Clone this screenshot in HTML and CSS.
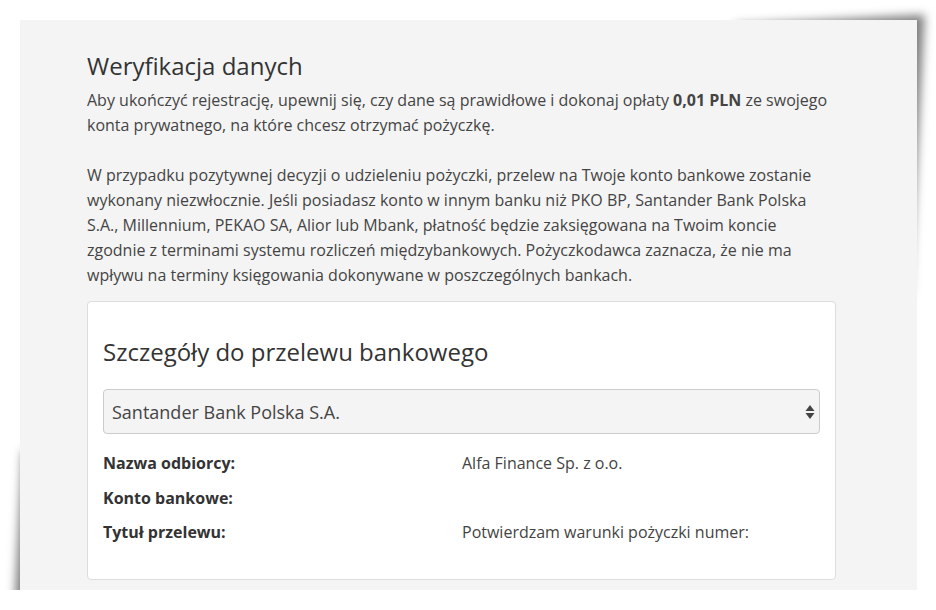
FILE: index.html
```html
<!DOCTYPE html>
<html lang="pl">
<head>
  <meta charset="UTF-8">
  <title>Weryfikacja danych</title>
  <meta name="viewport" content="width=device-width, initial-scale=1.0">
  <link rel="stylesheet" href="styles.css">
</head>
<body>

  <div class="sheet">
    <h2>Weryfikacja danych</h2>
    <p>Aby ukończyć rejestrację, upewnij się, czy dane są prawidłowe i dokonaj opłaty <b>0,01 PLN</b> ze swojego konta prywatnego, na które chcesz otrzymać pożyczkę.</p>
    <p class="last">W przypadku pozytywnej decyzji o udzieleniu pożyczki, przelew na Twoje konto bankowe zostanie wykonany niezwłocznie. Jeśli posiadasz konto w innym banku niż PKO BP, Santander Bank Polska S.A., Millennium, PEKAO SA, Alior lub Mbank, płatność będzie zaksięgowana na Twoim koncie zgodnie z terminami systemu rozliczeń międzybankowych. Pożyczkodawca zaznacza, że nie ma wpływu na terminy księgowania dokonywane w poszczególnych bankach.</p>

    <div class="card">
      <h3>Szczegóły do przelewu bankowego</h3>
      <div class="select">
        <span>Santander Bank Polska S.A.</span>
        <svg width="10" height="16" viewBox="0 0 10 16">
          <path d="M5 1 L9.5 7 L0.5 7 Z" fill="#444"/>
          <path d="M5 15 L9.5 9 L0.5 9 Z" fill="#444"/>
        </svg>
      </div>
      <div class="details">
        <div class="row"><b>Nazwa odbiorcy:</b><span>Alfa Finance Sp. z o.o.</span></div>
        <div class="row"><b>Konto bankowe:</b><span></span></div>
        <div class="row"><b>Tytuł przelewu:</b><span>Potwierdzam warunki pożyczki numer:</span></div>
      </div>
    </div>
  </div>

</body>
</html>
```

FILE: styles.css
```css
* {
  margin: 0;
  padding: 0;
  box-sizing: border-box;
}

body {
  background: #fff;
  font-family: 'Open Sans', sans-serif;
  color: #444;
}

.sheet {
  position: relative;
  margin: 20px 0 0 20px;
  width: 897px;
  height: 570px;
  background: #f4f4f4;
  padding: 30px 81px 0 67px;
}

/* uniesione rogi */
.sheet::before,
.sheet::after {
  content: '';
  position: absolute;
  z-index: -1;
  background: #888;
  transform: skew(-3deg, -3deg);
}

.sheet::after {
  top: 6px;
  right: 6px;
  width: 190px;
  height: 280px;
  box-shadow: 6px -6px 10px rgba(0, 0, 0, 0.5);
}

.sheet::before {
  bottom: 3px;
  left: 5px;
  width: 300px;
  height: 150px;
  box-shadow: -6px 6px 10px rgba(0, 0, 0, 0.5);
}

h2 {
  font-size: 24px;
  font-weight: 400;
  line-height: 32px;
  color: #333;
  margin-bottom: 6px;
}

p {
  font-size: 16px;
  line-height: 25px;
  margin-bottom: 25px;
}

p.last {
  margin-bottom: 13px;
}

.card {
  background: #fff;
  border: 1px solid #ddd;
  border-radius: 4px;
  padding: 33px 15px 0 15px;
  height: 279px;
}

h3 {
  font-size: 24px;
  font-weight: 400;
  line-height: 34px;
  color: #333;
  margin-bottom: 20px;
}

.select {
  display: flex;
  align-items: center;
  justify-content: space-between;
  height: 45px;
  padding: 0 4px 0 8px;
  background: #f4f4f4;
  border: 1px solid #ccc;
  border-radius: 4px;
  font-size: 18px;
}

.details {
  padding-top: 12px;
}

.row {
  display: flex;
  font-size: 16px;
  line-height: 34.5px;
}

.row b {
  width: 359px;
  font-weight: 700;
  color: #333;
}
```
